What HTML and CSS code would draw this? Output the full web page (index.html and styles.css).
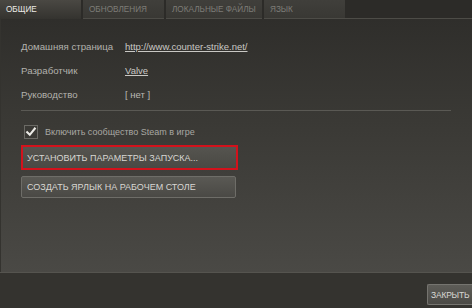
FILE: index.html
```html
<!DOCTYPE html>
<html>
<head>
<meta charset="utf-8">
<link rel="stylesheet" href="styles.css">
</head>
<body>
<div class="window">
  <div class="tabs">
    <div class="tab active">ОБЩИЕ</div>
    <div class="tab">ОБНОВЛЕНИЯ</div>
    <div class="tab wide">ЛОКАЛЬНЫЕ ФАЙЛЫ</div>
    <div class="tab">ЯЗЫК</div>
    <div class="tab-fill"></div>
  </div>
  <div class="panel">
    <div class="info">
      <div class="row"><span class="label">Домашняя страница</span><a class="value link">http://www.counter-strike.net/</a></div>
      <div class="row"><span class="label">Разработчик</span><a class="value link">Valve</a></div>
      <div class="row"><span class="label">Руководство</span><span class="value">[ нет ]</span></div>
    </div>
    <div class="sep"></div>
    <div class="check-row">
      <span class="checkbox">
        <svg width="12" height="12" viewBox="0 0 12 12"><path d="M2.2 6.2 L4.8 8.8 L9.8 2.6" fill="none" stroke="#ecebe7" stroke-width="2.1" stroke-linecap="square"/></svg>
      </span>
      <span class="check-label">Включить сообщество Steam в игре</span>
    </div>
    <div class="btn btn-wide highlighted">УСТАНОВИТЬ ПАРАМЕТРЫ ЗАПУСКА...</div>
    <div class="btn btn-wide second">СОЗДАТЬ ЯРЛЫК НА РАБОЧЕМ СТОЛЕ</div>
  </div>
  <div class="footer">
    <div class="btn close">ЗАКРЫТЬ</div>
  </div>
</div>
</body>
</html>
```
FILE: styles.css
```css
html, body {
  margin: 0;
  padding: 0;
}
body {
  width: 472px;
  height: 308px;
  overflow: hidden;
  background: #34332f;
  font-family: "Liberation Sans", Arial, sans-serif;
  font-size: 9.5px;
}
.window {
  display: flex;
  flex-direction: column;
  height: 308px;
}
.tabs {
  display: flex;
  height: 19px;
  background: #2c2b28;
  flex: none;
}
.tab {
  display: flex;
  align-items: center;
  box-sizing: border-box;
  padding-left: 6px;
  width: 81px;
  margin-right: 2px;
  background: linear-gradient(#403f3b, #393834);
  color: #7d7c77;
  font-size: 8.2px;
  white-space: nowrap;
  overflow: hidden;
  border-bottom: 1px solid #4d4c47;
}
.tab.wide { width: 96px; }
.tab.active {
  background: linear-gradient(#4a4843, #34332f);
  color: #ecebe7;
  border-bottom: none;
}
.tab-fill {
  flex: 1;
  border-bottom: 1px solid #4d4c47;
  margin-left: -2px;
}
.panel {
  flex: none;
  height: 253px;
  margin-left: 1px;
  background: linear-gradient(#2f2e2b 0%, #3a3935 40%, #4a4945 100%);
  padding: 21px 0 0 20px;
  box-sizing: border-box;
}
.info {
  display: flex;
  flex-direction: column;
  gap: 12px;
}
.row {
  display: flex;
  height: 12px;
  align-items: center;
}
.label {
  width: 104px;
  color: #b3b2ad;
  font-size: 9.7px;
}
.value {
  color: #b9b8b3;
}
.link {
  color: #c9c8c4;
  text-decoration: underline;
}
.sep {
  margin-top: 10px;
  width: 430px;
  height: 1px;
  background: #5a5954;
}
.check-row {
  display: flex;
  align-items: center;
  margin-top: 14px;
  margin-left: 3px;
  height: 14px;
}
.checkbox {
  width: 12px;
  height: 12px;
  border: 1px solid #6b6a65;
  background: #3a3935;
  display: flex;
  align-items: center;
  justify-content: center;
}
.check-label {
  margin-left: 7px;
  color: #a9a8a3;
  font-size: 9px;
}
.btn {
  display: flex;
  align-items: center;
  box-sizing: border-box;
  color: #d8d7d3;
  font-size: 9px;
  white-space: nowrap;
  background: linear-gradient(#5a5954, #4a4945);
  border: 1px solid #6e6d68;
  border-radius: 2px;
}
.btn-wide {
  width: 217px;
  height: 25px;
  padding-left: 5px;
}
.highlighted {
  margin-top: 6px;
  border: 2px solid #d3121c;
  border-radius: 0;
  background: linear-gradient(#55544f, #4a4944);
  padding-left: 4px;
}
.second {
  margin-top: 6px;
  width: 215px;
  height: 22px;
}
.footer {
  flex: 1;
  display: flex;
  justify-content: flex-end;
  align-items: flex-start;
  padding-top: 11px;
  border-top: 1px solid #55544f;
}
.close {
  width: 45px;
  height: 21px;
  padding-left: 3px;
  letter-spacing: -0.2px;
  font-size: 8.5px;
  background: linear-gradient(#5d5c57, #4b4a46);
  border: 1px solid #75746f;
  border-right: none;
  border-radius: 2px 0 0 2px;
}
```
